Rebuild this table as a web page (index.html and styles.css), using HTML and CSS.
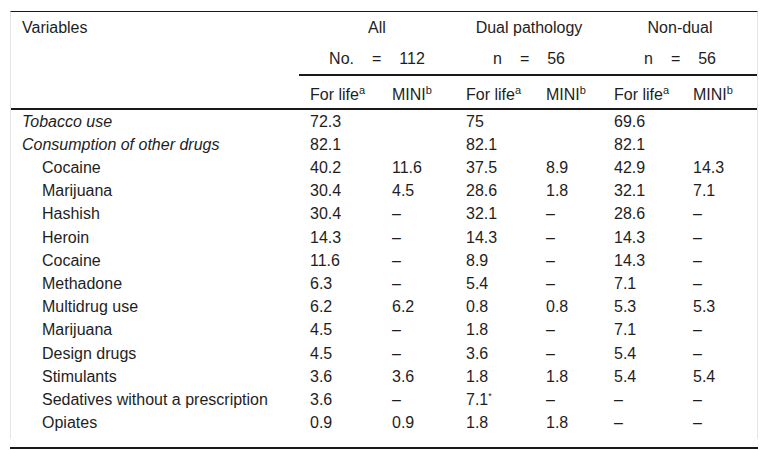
FILE: index.html
```html
<!DOCTYPE html>
<html lang="en">
<head>
<meta charset="utf-8">
<title>Table</title>
<link rel="stylesheet" href="styles.css">
</head>
<body>
<div class="wrap">
<table class="tbl">
<colgroup>
<col class="c-var"><col class="c-a1"><col class="c-a2"><col class="c-d1"><col class="c-d2"><col class="c-n1"><col class="c-n2">
</colgroup>
<thead>
<tr>
<th class="var" rowspan="3">Variables</th>
<th class="grp" colspan="2">All</th>
<th class="grp" colspan="2">Dual pathology</th>
<th class="grp" colspan="2">Non-dual</th>
</tr>
<tr>
<th class="cnt" colspan="2"><span class="eq"><span>No.</span><span>=</span><span>112</span></span></th>
<th class="cnt" colspan="2"><span class="eq"><span>n</span><span>=</span><span>56</span></span></th>
<th class="cnt" colspan="2"><span class="eq"><span>n</span><span>=</span><span>56</span></span></th>
</tr>
<tr class="sub">
<th>For life<sup>a</sup></th><th>MINI<sup>b</sup></th>
<th>For life<sup>a</sup></th><th>MINI<sup>b</sup></th>
<th>For life<sup>a</sup></th><th>MINI<sup>b</sup></th>
</tr>
</thead>
<tbody>
<tr><td class="it">Tobacco use</td><td>72.3</td><td></td><td>75</td><td></td><td>69.6</td><td></td></tr>
<tr><td class="it">Consumption of other drugs</td><td>82.1</td><td></td><td>82.1</td><td></td><td>82.1</td><td></td></tr>
<tr><td class="ind">Cocaine</td><td>40.2</td><td>11.6</td><td>37.5</td><td>8.9</td><td>42.9</td><td>14.3</td></tr>
<tr><td class="ind">Marijuana</td><td>30.4</td><td>4.5</td><td>28.6</td><td>1.8</td><td>32.1</td><td>7.1</td></tr>
<tr><td class="ind">Hashish</td><td>30.4</td><td>–</td><td>32.1</td><td>–</td><td>28.6</td><td>–</td></tr>
<tr><td class="ind">Heroin</td><td>14.3</td><td>–</td><td>14.3</td><td>–</td><td>14.3</td><td>–</td></tr>
<tr><td class="ind">Cocaine</td><td>11.6</td><td>–</td><td>8.9</td><td>–</td><td>14.3</td><td>–</td></tr>
<tr><td class="ind">Methadone</td><td>6.3</td><td>–</td><td>5.4</td><td>–</td><td>7.1</td><td>–</td></tr>
<tr><td class="ind">Multidrug use</td><td>6.2</td><td>6.2</td><td>0.8</td><td>0.8</td><td>5.3</td><td>5.3</td></tr>
<tr><td class="ind">Marijuana</td><td>4.5</td><td>–</td><td>1.8</td><td>–</td><td>7.1</td><td>–</td></tr>
<tr><td class="ind">Design drugs</td><td>4.5</td><td>–</td><td>3.6</td><td>–</td><td>5.4</td><td>–</td></tr>
<tr><td class="ind">Stimulants</td><td>3.6</td><td>3.6</td><td>1.8</td><td>1.8</td><td>5.4</td><td>5.4</td></tr>
<tr><td class="ind">Sedatives without a prescription</td><td>3.6</td><td>–</td><td>7.1<sup class="star">*</sup></td><td>–</td><td>–</td><td>–</td></tr>
<tr><td class="ind">Opiates</td><td>0.9</td><td>0.9</td><td>1.8</td><td>1.8</td><td>–</td><td>–</td></tr>
</tbody>
</table>
</div>
<div class="rule"></div>
</body>
</html>
```

FILE: styles.css
```css
html, body {
  margin: 0;
  padding: 0;
  background: #ffffff;
}

body {
  font-family: "Liberation Sans", Arial, sans-serif;
  font-size: 16px;
  color: #1e1e1e;
}

.wrap {
  margin: 11px 0 0 10px;
  width: 746px;
  border-left: 1px solid #e4e4e4;
  border-right: 1px solid #e4e4e4;
  border-top: 1px solid #1a1a1a;
  padding-bottom: 5px;
}

.tbl {
  border-collapse: collapse;
  table-layout: fixed;
  width: 746px;
}

.c-var { width: 288px; }
.c-a1 { width: 82px; }
.c-a2 { width: 74px; }
.c-d1 { width: 80px; }
.c-d2 { width: 68px; }
.c-n1 { width: 79px; }
.c-n2 { width: 75px; }

.tbl th,
.tbl td {
  font-weight: normal;
  text-align: left;
  line-height: 19.2px;
  white-space: nowrap;
  padding: 2px 0 2px 11px;
  vertical-align: top;
}

.tbl th {
  padding-top: 6px;
  padding-bottom: 6px;
}

.tbl th.var {
  border-bottom: 2px solid #1a1a1a;
}

.tbl th.grp {
  text-align: center;
  padding-left: 0;
}

.tbl th.cnt {
  text-align: center;
  padding-left: 0;
  border-bottom: 2px solid #1a1a1a;
}

.eq {
  display: inline-flex;
  gap: 18px;
}

.tbl .sub th {
  padding-top: 9px;
  padding-bottom: 3px;
  border-bottom: 2px solid #1a1a1a;
}

sup {
  font-size: 11px;
  line-height: 0;
  vertical-align: 6px;
}

sup.star {
  font-size: 9px;
}

.tbl td.it {
  font-style: italic;
}

.tbl td.ind {
  padding-left: 31px;
}

.rule {
  margin: 8px 0 0 10px;
  width: 748px;
  border-top: 2px solid #1a1a1a;
}
```
